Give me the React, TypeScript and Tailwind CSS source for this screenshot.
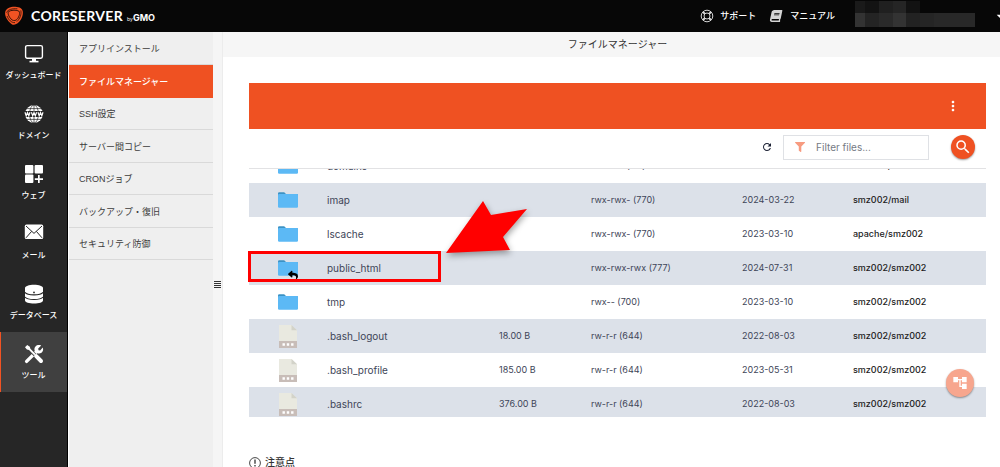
import React from 'react';
import { FaBook, FaFilter, FaReply } from 'react-icons/fa';
import { MdAccountTree, MdArrowDropDown, MdMoreVert, MdRefresh, MdSearch } from 'react-icons/md';

interface NavItem {
  label: string;
  icon: React.ReactNode;
  active?: boolean;
}

interface FileRow {
  name: string;
  type: 'folder' | 'link' | 'file';
  size?: string;
  mode: string;
  date: string;
  owner: string;
}

const MonitorIcon = () => (
  <svg viewBox="0 0 20 20" className="size-5" fill="none" stroke="currentColor">
    <rect x="1.6" y="1.6" width="16.8" height="12.6" rx="1.6" strokeWidth="1.4" />
    <path d="M8 14.5h4v2.6H8z" fill="currentColor" stroke="none" />
    <path d="M5.5 17.6h9" strokeWidth="1.6" />
  </svg>
);

const GlobeIcon = () => (
  <svg viewBox="0 0 20 20" className="size-5">
    <circle cx="10" cy="10" r="9" fill="currentColor" />
    <g stroke="#262626" fill="none" strokeWidth=".7">
      <ellipse cx="10" cy="10" rx="4.4" ry="9" />
      <path d="M10 1v18M2.5 4.6h15M2.5 15.4h15" />
    </g>
    <path d="M0 7h20v6H0z" fill="#262626" />
    <path
      d="M1 8.2l1.2 3.6 1.3-3.2 1.3 3.2L6 8.2M7.4 8.2l1.3 3.6L10 8.6l1.3 3.2 1.3-3.6M14 8.2l1.2 3.6 1.3-3.2 1.3 3.2L19 8.2"
      fill="none"
      stroke="currentColor"
      strokeWidth="1.2"
    />
  </svg>
);

const WebIcon = () => (
  <svg viewBox="0 0 20 20" className="size-5" fill="currentColor">
    <rect x="1" y="1" width="8.4" height="8.4" rx="1" />
    <rect x="10.6" y="1" width="8.4" height="8.4" rx="1" />
    <rect x="1" y="10.6" width="8.4" height="8.4" rx="1" />
    <path d="M14 11h1.7v3.2H19v1.7h-3.3V19H14v-3.1h-3.2v-1.7H14z" />
  </svg>
);

const MailIcon = () => (
  <svg viewBox="0 0 20 20" className="size-5">
    <rect x=".8" y=".6" width="18.4" height="14.4" rx="1.6" fill="currentColor" />
    <path d="M2 2l8 7.400L18 2M2 13.800l5.600-6.400M18 13.800l-5.600-6.400" fill="none" stroke="#262626" strokeWidth="1" />
  </svg>
);

const DatabaseIcon = () => (
  <svg viewBox="0 0 20 20" className="size-5">
    <path d="M1 4c0-1.800 4-3.200 9-3.200S19 2.200 19 4v12.600c0 1.700-4 3-9 3s-9-1.300-9-3z" fill="currentColor" />
    <path
      d="M1 8.400c1.400 1.800 5 2.500 9 2.500s7.600-.7 9-2.500M1 13c1.400 1.800 5 2.500 9 2.500s7.600-.7 9-2.500"
      fill="none"
      stroke="#262626"
      strokeWidth="1.100"
    />
    <circle cx="10" cy="8.400" r=".9" fill="#262626" />
  </svg>
);

const ToolsIcon = () => (
  <svg viewBox="0 0 20 20" className="size-5">
    <path d="M2.600 17.400L12.500 7.600" stroke="currentColor" strokeWidth="3.400" strokeLinecap="round" />
    <path
      d="M17.200 1.600l-3 3 .3 1.600 1.600.3 2.700-2.900c.8 2.300.1 4.200-1.300 5.200-1.500 1-3.300.9-4.600.2L10.800 7c-.7-1.600-.5-3.200.7-4.500 1.400-1.400 3.600-1.800 5.700-.9z"
      fill="currentColor"
    />
    <path d="M3 3l8 8" stroke="#404040" strokeWidth="3.200" />
    <path d="M1 3.200L3.200 1l2.600 1.800.6 1.900 5.200 5.200-1.400 1.400L5 6.100l-2.100-.5z" fill="currentColor" />
    <path d="M12.200 12.200l4.800 4.800" stroke="currentColor" strokeWidth="4" strokeLinecap="round" />
  </svg>
);

const LogoMark = () => (
  <svg viewBox="0 0 20 20" className="size-5">
    <path
      d="M1.200 6C2 2 7 .4 11.400.7c4.200.3 7 1.700 7.400 4.900.5 4-1.400 8.300-4.400 11-2.400 2.100-4.800 2.900-7 1.300C3.800 15.200.4 10.200 1.200 6z"
      fill="#f15323"
    />
    <path
      d="M4.600 5.600c2-1.700 8.800-2 10.600-.2 1.300 1.900-.6 7-3 8.600-1.600 1-3.800.6-5.200-1-2-2.200-3.800-5.800-2.400-7.400z"
      fill="#f15323"
      stroke="#2a0e06"
      strokeWidth=".9"
    />
    <path
      d="M2.400 6.600C4 3.400 8.400 2.400 13.400 2.800M16.800 4.400c1 4-1 8.600-4 11.200M11 16.600C7.400 17 4.600 13.800 3 10"
      fill="none"
      stroke="#2a0e06"
      strokeWidth=".8"
    />
  </svg>
);

const LifebuoyIcon = () => (
  <svg viewBox="0 0 14 14" className="size-[14px]" fill="none" stroke="#d4d4d4">
    <circle cx="7" cy="7" r="5.800" />
    <circle cx="7" cy="7" r="3" />
    <path d="M2.800 2.800L5 5M9 9l2.200 2.200M11.200 2.800L9 5M5 9l-2.200 2.200" strokeWidth="2" />
  </svg>
);

const FolderIcon = ({ linked }: { linked: boolean }) => (
  <span className="relative block h-4 w-5">
    <svg viewBox="0 0 20 16" className="h-4 w-5">
      <path d="M0 2.500V1.500Q0 .3 1.200.3h5L8 2h10.800Q20 2 20 3.200V6H0z" fill="#3c92c4" />
      <path d="M0 3.200Q0 2 1.200 2h17.600Q20 2 20 3.200v11.300q0 1.200-1.200 1.200H1.200Q0 15.700 0 14.500z" fill="#5cb9f5" />
    </svg>
    {linked && <FaReply className="absolute right-0 -bottom-1 size-[10px] text-black" />}
  </span>
);

const FileIcon = () => (
  <svg viewBox="0 0 18 23" className="mx-px h-[23px] w-[18px]">
    <path d="M0 0h12.500L18 5.200V16H0z" fill="#e9e9e0" />
    <path d="M12.500 0v5.200H18z" fill="#d3d3c9" />
    <path d="M0 16h18v7H0z" fill="#c8bdb8" />
    <path d="M3.500 18.300h2.400v2.400H3.500zM7.800 18.300h2.400v2.400H7.800zM12.100 18.300h2.400v2.400h-2.400z" fill="#fff" />
  </svg>
);

const navItems: NavItem[] = [
  { label: 'ダッシュボード', icon: <MonitorIcon /> },
  { label: 'ドメイン', icon: <GlobeIcon /> },
  { label: 'ウェブ', icon: <WebIcon /> },
  { label: 'メール', icon: <MailIcon /> },
  { label: 'データベース', icon: <DatabaseIcon /> },
  { label: 'ツール', icon: <ToolsIcon />, active: true },
];

const subItems = [
  'アプリインストール',
  'ファイルマネージャー',
  'SSH設定',
  'サーバー間コピー',
  'CRONジョブ',
  'バックアップ・復旧',
  'セキュリティ防御',
];

const files: FileRow[] = [
  { name: 'domains', type: 'folder', mode: 'rwx-x-x (711)', date: '2024-03-22', owner: 'smz002/smz002' },
  { name: 'imap', type: 'folder', mode: 'rwx-rwx- (770)', date: '2024-03-22', owner: 'smz002/mail' },
  { name: 'lscache', type: 'folder', mode: 'rwx-rwx- (770)', date: '2023-03-10', owner: 'apache/smz002' },
  { name: 'public_html', type: 'link', mode: 'rwx-rwx-rwx (777)', date: '2024-07-31', owner: 'smz002/smz002' },
  { name: 'tmp', type: 'folder', mode: 'rwx-- (700)', date: '2023-03-10', owner: 'smz002/smz002' },
  { name: '.bash_logout', type: 'file', size: '18.00 B', mode: 'rw-r-r (644)', date: '2022-08-03', owner: 'smz002/smz002' },
  { name: '.bash_profile', type: 'file', size: '185.00 B', mode: 'rw-r-r (644)', date: '2023-05-31', owner: 'smz002/smz002' },
  { name: '.bashrc', type: 'file', size: '376.00 B', mode: 'rw-r-r (644)', date: '2022-08-03', owner: 'smz002/smz002' },
];

// masked account name: x, y, width, height, fill
const maskCells: [number, number, number, number, string][] = [
  [0, 0, 10, 12, '#1a1a1a'],
  [10, 0, 14, 12, '#131313'],
  [24, 0, 14, 12, '#202020'],
  [38, 0, 13, 12, '#252525'],
  [51, 0, 14, 12, '#121212'],
  [0, 12, 10, 14, '#333333'],
  [10, 12, 14, 14, '#242424'],
  [24, 12, 14, 14, '#2a2a2a'],
  [38, 12, 13, 14, '#333333'],
  [51, 12, 14, 14, '#222222'],
  [65, 12, 14, 14, '#252525'],
  [79, 12, 41, 14, '#282828'],
];

const Header: React.FC = () => (
  <header className="flex h-8 shrink-0 items-center bg-[#070707] pl-1 text-white">
    <a href="#" className="flex items-center">
      <LogoMark />
      <span className="ml-[7px] font-['Lato'] text-[14px] leading-5 font-bold tracking-wide">CORESERVER</span>
      <span className="mt-1 ml-1 flex items-baseline font-['Inter'] leading-3">
        <span className="text-[5px]">by</span>
        <span className="text-[9px] font-bold">GMO</span>
      </span>
    </a>
    <nav className="ml-auto flex items-center text-[9px] font-medium">
      <a href="#" className="flex items-center gap-[6px]">
        <LifebuoyIcon />
        <span className="pt-px">サポート</span>
      </a>
      <a href="#" className="ml-[14px] flex items-center gap-2">
        <FaBook className="size-3 -skew-x-12 text-neutral-300" />
        <span className="pt-px">マニュアル</span>
      </a>
    </nav>
    <svg viewBox="0 0 120 26" className="mb-1 ml-5 h-[26px] w-[120px]">
      {maskCells.map(([x, y, w, h, fill]) => (
        <rect key={`${x}-${y}`} x={x} y={y} width={w} height={h} fill={fill} />
      ))}
    </svg>
    <button aria-label="アカウント" className="ml-[17px] w-2 overflow-hidden">
      <MdArrowDropDown className="size-4" />
    </button>
  </header>
);

const Sidebar: React.FC = () => (
  <nav className="w-[68px] shrink-0 border-r border-black bg-[#262626] text-white">
    {navItems.map((item) => (
      <a
        key={item.label}
        href="#"
        className={`relative flex h-[60px] flex-col items-center pt-3 ${item.active ? 'bg-[#404040]' : ''}`}
      >
        {item.active && <span className="absolute inset-y-0 left-0 w-px bg-[#f15323]" />}
        {item.icon}
        <span className="mt-1 text-[8px] leading-4 font-medium whitespace-nowrap">{item.label}</span>
      </a>
    ))}
  </nav>
);

const SubMenu: React.FC = () => (
  <nav className="w-[145px] shrink-0 border-l border-white bg-[#efefef] pt-px text-[9px] text-[#3c3c3c]">
    {subItems.map((label, i) => (
      <a
        key={label}
        href="#"
        className={`flex h-8 items-center border-b pt-[3px] pl-[10px] even:h-[33px] ${
          i === 1 ? 'border-[#ef5122] bg-[#ef5122] font-medium text-white' : 'border-[#d9d9d9]'
        }`}
      >
        {label}
      </a>
    ))}
  </nav>
);

const FileTable: React.FC = () => (
  <div className="relative">
    <div className="h-[249px] overflow-hidden border-t border-[#e2e2e4]">
      <table className="-mt-5 w-full table-fixed text-left font-['Inter'] text-[9px] text-[#3e4558]">
        <colgroup>
          <col className="w-[78px]" />
          <col />
          <col className="w-[92px]" />
          <col className="w-[151px]" />
          <col className="w-[111px]" />
          <col className="w-[133px]" />
        </colgroup>
        <tbody>
          {files.map((file) => (
            <tr key={file.name} className="h-[34px] bg-white even:bg-[#dce1e9]">
              <td className="pl-[29px]">
                {file.type === 'file' ? <FileIcon /> : <FolderIcon linked={file.type === 'link'} />}
              </td>
              <td className="text-[10px]">{file.name}</td>
              <td>{file.size}</td>
              <td>{file.mode}</td>
              <td>{file.date}</td>
              <td className="font-medium text-[#1c1c1c]">{file.owner}</td>
            </tr>
          ))}
        </tbody>
      </table>
    </div>

    {/* Callout on public_html */}
    <div className="pointer-events-none absolute top-[83px] -left-px h-[31px] w-[193px] border-3 border-[#ff0000]" />
    <svg
      viewBox="0 0 90 66"
      className="pointer-events-none absolute top-7 left-[192px] h-[66px] w-[90px] overflow-visible drop-shadow-[1px_3px_3px_rgba(0,0,0,0.35)]"
    >
      <path d="M5 57L42 5l8 14 36-6-24 28 7 13z" fill="#ff0000" />
    </svg>

    <button
      aria-label="ツリー"
      className="absolute right-3 bottom-5 flex size-7 items-center justify-center rounded-full bg-[#f7a68e] text-white shadow-[0_1px_2px_rgba(0,0,0,0.4)]"
    >
      <MdAccountTree className="size-4" />
    </button>
  </div>
);

const FileManager: React.FC = () => (
  <main className="min-w-0 flex-1 border-l border-[#ececec] bg-white">
    <h1 className="h-[25px] bg-[#f6f6f6] pt-px pl-3 text-center text-[10px] leading-6 text-[#333]">ファイルマネージャー</h1>
    <div className="pt-[26px] pr-[14px] pl-[26px]">
      <div className="flex h-[46px] items-center justify-end bg-[#ef5122] pr-[25px] text-white">
        <button aria-label="メニュー">
          <MdMoreVert className="size-4" />
        </button>
      </div>
      <div className="flex h-[39px] items-center justify-end pr-[11px] pb-[3px]">
        <button aria-label="更新" className="mr-[10px] text-[#1b2033]">
          <MdRefresh className="size-3" />
        </button>
        <label className="mr-[22px] flex h-[25px] w-[146px] items-center border border-[#dfe1e5] pl-[11px]">
          <FaFilter className="size-3 text-[#f79b80]" />
          <input
            type="text"
            aria-label="Filter files"
            placeholder="Filter files..."
            className="ml-[11px] w-full min-w-0 font-['Inter'] text-[10px] text-[#3e4558] outline-none placeholder:text-[#757a84]"
          />
        </label>
        <button
          aria-label="検索"
          className="flex size-6 items-center justify-center rounded-full bg-[#ef5122] text-white shadow-[0_1px_2px_rgba(0,0,0,0.4)]"
        >
          <MdSearch className="size-[18px]" />
        </button>
      </div>
      <FileTable />
      <h2 className="mt-10 flex items-center gap-1 text-[10px] leading-3 font-medium text-[#333]">
        <svg viewBox="0 0 12 12" className="size-3" fill="none" stroke="currentColor">
          <circle cx="6" cy="6" r="5.400" strokeWidth=".9" />
          <path d="M6 2.600v4.200M6 8v1.400" strokeWidth="1.300" />
        </svg>
        注意点
      </h2>
    </div>
  </main>
);

const App: React.FC = () => (
  <div className="flex h-screen flex-col overflow-hidden font-['Liberation_Sans','Noto_Sans_CJK_JP',sans-serif]">
    <Header />
    <div className="flex min-h-0 flex-1">
      <Sidebar />
      <SubMenu />
      <div className="flex w-[9px] shrink-0 flex-col items-center justify-center gap-px bg-[#f5f5f5] pt-[70px]">
        <span className="h-px w-[7px] bg-[#333]" />
        <span className="h-px w-[7px] bg-[#333]" />
        <span className="h-px w-[7px] bg-[#333]" />
        <span className="h-px w-[7px] bg-[#333]" />
      </div>
      <FileManager />
    </div>
  </div>
);

export default App;
